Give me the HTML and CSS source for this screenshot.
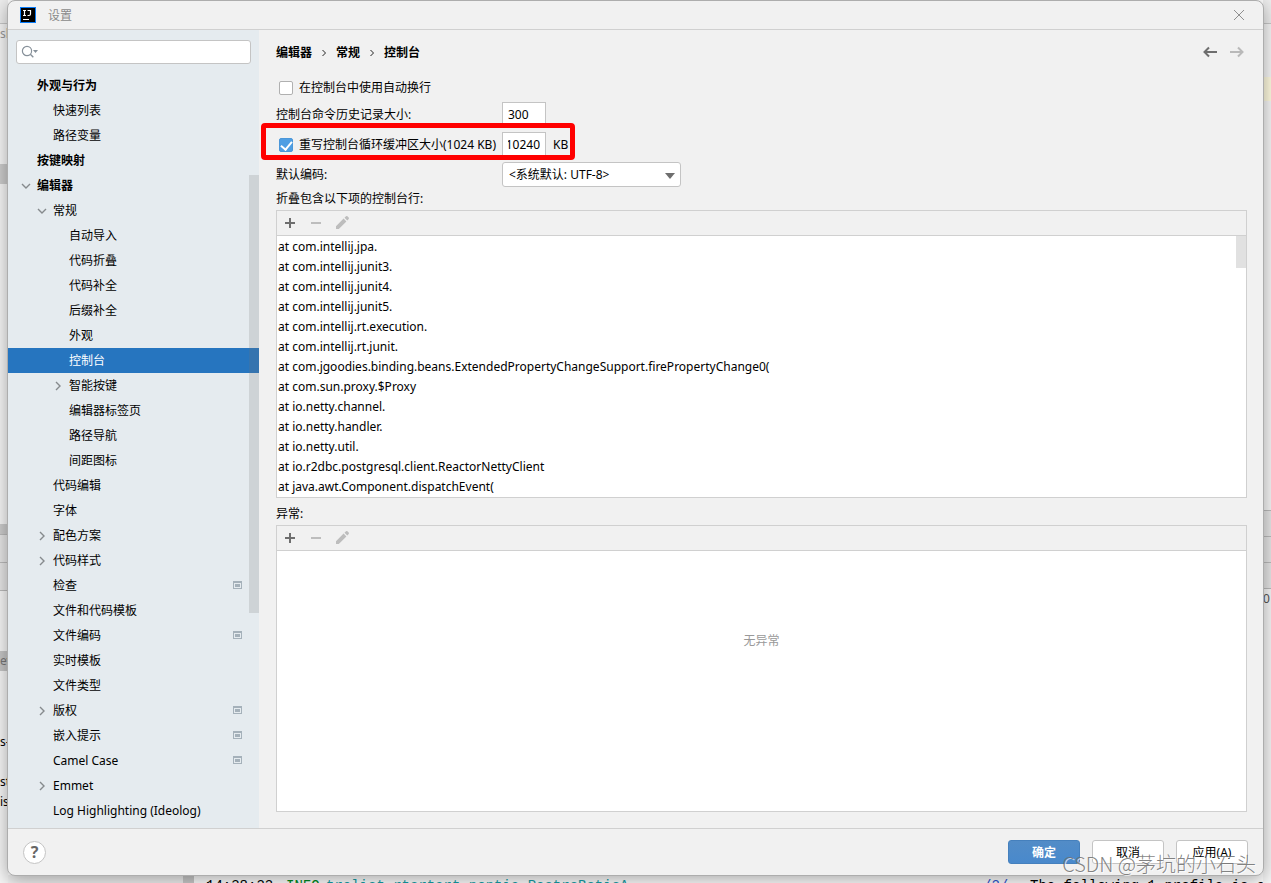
FILE: index.html
```html
<!DOCTYPE html>
<html lang="zh-CN">
<head>
<meta charset="utf-8">
<title>设置</title>
<link rel="stylesheet" href="styles.css">
</head>
<body>
<svg class="defs" aria-hidden="true">
  <symbol id="down" viewBox="0 0 10 10"><path d="M1 3l4 4 4-4" fill="none" stroke="#868a8d" stroke-width="1.4"/></symbol>
  <symbol id="right" viewBox="0 0 10 10"><path d="M3 1l4 4-4 4" fill="none" stroke="#868a8d" stroke-width="1.4"/></symbol>
  <symbol id="project" viewBox="0 0 9 8"><path d="M0 0h9v8H0z" fill="#a5b1ba"/><path d="M1 2h7v5H1z" fill="#e5ebef"/><path d="M2 3h5v3H2z" fill="#a5b1ba"/></symbol>
  <symbol id="plus" viewBox="0 0 16 16"><path d="M3 8h10M8 3v10" fill="none" stroke="#6e6e6e" stroke-width="2"/></symbol>
  <symbol id="minus" viewBox="0 0 16 16"><path d="M3 8h10" fill="none" stroke="#bdbdbd" stroke-width="2"/></symbol>
  <symbol id="pencil" viewBox="0 0 16 16"><path d="M2 11.2l7.6-7.6 2.8 2.8L4.800 14H2zM10.500 2.700L12 1.300q.7-.6 1.400 0l1.300 1.300q.6.700 0 1.400l-1.400 1.500z" fill="#bdbdbd"/></symbol>
</svg>

<div class="backdrop" aria-hidden="true">
  <div class="edge">
    <div class="e-top"></div>
    <div class="e-tab">sl</div>
    <div class="e-mark"></div>
    <div class="e-rest"></div>
    <div class="e-band e-dark"></div>
    <div class="e-band"></div>
    <div class="e-band"></div>
    <div class="e-page"><span class="e-ev">ev</span><span class="e-s">s-</span><span>st</span><span>is</span></div>
  </div>
  <div class="console"><span class="time">14:38:33</span><span class="info">INFO</span><span class="logger">trelist rtsrtart nontic.RestrsBstisA</span><span class="num">/2/</span><span>The following 1 profile is act</span></div>
  <div class="edge edge-right">
    <div class="e-top"></div>
    <div class="e-tab"></div>
    <div class="e-yellow"></div>
    <div class="e-rest"></div>
    <div class="e-band"></div>
    <div class="e-band"></div>
    <div class="e-band"></div>
    <div class="e-page"><span>0</span></div>
  </div>
</div>

<div class="dialog">
  <header class="titlebar">
    <svg class="logo" viewBox="0 0 16 16" aria-hidden="true"><path d="M0 0h16v16H0z" fill="#087cfa"/><path d="M1 1h14v14H1z" fill="#000"/><path d="M3 3.500h3M4.500 3v6M3 8.500h3M7.500 3.500h3V7q0 1.500-1.500 1.500H7.500M3 12.500h6" fill="none" stroke="#fff" stroke-width="1.200"/></svg>
    <span class="title">设置</span>
    <button class="close" aria-label="关闭"><svg viewBox="0 0 12 12"><path d="M1 1l10 10M11 1L1 11" fill="none" stroke="#8f8f8f"/></svg></button>
  </header>

  <div class="body">
    <nav class="sidebar">
      <label class="search">
        <svg viewBox="0 0 18 14" aria-hidden="true"><circle cx="6" cy="6" r="4.600" fill="none" stroke="#87919a" stroke-width="1.200"/><path d="M9.300 9.300l3 3" stroke="#87919a" stroke-width="1.400"/><path d="M12 5h5l-2.500 3z" fill="#87919a"/></svg>
        <input type="text" aria-label="搜索">
      </label>
      <ul class="tree">
        <li class="l0">外观与行为</li>
        <li class="l1">快速列表</li>
        <li class="l1">路径变量</li>
        <li class="l0">按键映射</li>
        <li class="l0"><svg class="arrow"><use href="#down"/></svg>编辑器</li>
        <li class="l1"><svg class="arrow"><use href="#down"/></svg>常规</li>
        <li class="l2">自动导入</li>
        <li class="l2">代码折叠</li>
        <li class="l2">代码补全</li>
        <li class="l2">后缀补全</li>
        <li class="l2">外观</li>
        <li class="l2 selected" aria-current="page">控制台</li>
        <li class="l2"><svg class="arrow"><use href="#right"/></svg>智能按键</li>
        <li class="l2">编辑器标签页</li>
        <li class="l2">路径导航</li>
        <li class="l2">间距图标</li>
        <li class="l1">代码编辑</li>
        <li class="l1">字体</li>
        <li class="l1"><svg class="arrow"><use href="#right"/></svg>配色方案</li>
        <li class="l1"><svg class="arrow"><use href="#right"/></svg>代码样式</li>
        <li class="l1">检查<svg class="badge"><use href="#project"/></svg></li>
        <li class="l1">文件和代码模板</li>
        <li class="l1">文件编码<svg class="badge"><use href="#project"/></svg></li>
        <li class="l1">实时模板</li>
        <li class="l1">文件类型</li>
        <li class="l1"><svg class="arrow"><use href="#right"/></svg>版权<svg class="badge"><use href="#project"/></svg></li>
        <li class="l1">嵌入提示<svg class="badge"><use href="#project"/></svg></li>
        <li class="l1">Camel Case<svg class="badge"><use href="#project"/></svg></li>
        <li class="l1"><svg class="arrow"><use href="#right"/></svg>Emmet</li>
        <li class="l1">Log Highlighting (Ideolog)</li>
      </ul>
      <div class="thumb"></div>
    </nav>

    <main class="content">
      <div class="crumbs">
        <span>编辑器</span><svg viewBox="0 0 4 8"><path d="M.5 1l3 3-3 3" fill="none" stroke="#222"/></svg>
        <span>常规</span><svg viewBox="0 0 4 8"><path d="M.5 1l3 3-3 3" fill="none" stroke="#222"/></svg>
        <span>控制台</span>
        <div class="history">
          <button aria-label="后退"><svg viewBox="0 0 14 12"><path d="M1.500 6H14M6 1.500L1.500 6 6 10.500" fill="none" stroke="#6e6e6e" stroke-width="2"/></svg></button>
          <button aria-label="前进" disabled><svg viewBox="0 0 14 12"><path d="M0 6h12.500M8 1.500L12.500 6 8 10.500" fill="none" stroke="#b9b9b9" stroke-width="2"/></svg></button>
        </div>
      </div>
      <label class="check wrap"><input type="checkbox">在控制台中使用自动换行</label>
      <div class="form">
        <div class="row">
          <label class="name" for="history">控制台命令历史记录大小:</label>
          <input class="field" id="history" type="text" value="300">
        </div>
        <div class="row marked">
          <label class="check name"><input type="checkbox" checked>重写控制台循环缓冲区大小(1024 KB)</label>
          <input class="field scrolled" id="buffer" type="text" value="10240">
          <label class="unit" for="buffer">KB</label>
          <div class="frame"></div>
        </div>
        <div class="row">
          <label class="name" for="encoding">默认编码:</label>
          <span class="combo"><select id="encoding"><option>&lt;系统默认: UTF-8&gt;</option></select><svg viewBox="0 0 10 6" aria-hidden="true"><path d="M0 0h10L5 6z" fill="#6e6e6e"/></svg></span>
        </div>
      </div>
      <div class="caption first">折叠包含以下项的控制台行:</div>
      <section class="panel">
        <div class="tools">
          <button aria-label="添加"><svg><use href="#plus"/></svg></button>
          <button aria-label="移除" disabled><svg><use href="#minus"/></svg></button>
          <button aria-label="编辑" disabled><svg><use href="#pencil"/></svg></button>
        </div>
        <ul class="lines">
          <li>at com.intellij.jpa.</li>
          <li>at com.intellij.junit3.</li>
          <li>at com.intellij.junit4.</li>
          <li>at com.intellij.junit5.</li>
          <li>at com.intellij.rt.execution.</li>
          <li>at com.intellij.rt.junit.</li>
          <li>at com.jgoodies.binding.beans.ExtendedPropertyChangeSupport.firePropertyChange0(</li>
          <li>at com.sun.proxy.$Proxy</li>
          <li>at io.netty.channel.</li>
          <li>at io.netty.handler.</li>
          <li>at io.netty.util.</li>
          <li>at io.r2dbc.postgresql.client.ReactorNettyClient</li>
          <li>at java.awt.Component.dispatchEvent(</li>
        </ul>
        <div class="list-thumb"></div>
      </section>
      <div class="caption">异常:</div>
      <section class="panel">
        <div class="tools">
          <button aria-label="添加"><svg><use href="#plus"/></svg></button>
          <button aria-label="移除" disabled><svg><use href="#minus"/></svg></button>
          <button aria-label="编辑" disabled><svg><use href="#pencil"/></svg></button>
        </div>
        <div class="empty">无异常</div>
      </section>
    </main>
  </div>

  <footer class="footer">
    <button class="help" aria-label="帮助">?</button>
    <button class="btn primary">确定</button>
    <button class="btn">取消</button>
    <button class="btn">应用(A)</button>
  </footer>
</div>
<div class="watermark">CSDN @茅坑的小石头</div>
</body>
</html>
```

FILE: styles.css
```css
* { box-sizing: border-box; }

body {
  margin: 0;
  height: 100vh;
  display: grid;
  grid-template: minmax(0, 1fr) / minmax(0, 1fr);
  overflow: hidden;
  position: relative;
  background: #f2f2f2;
  color: #000;
  font: 12px/20px "Noto Sans", "Noto Sans CJK SC", sans-serif;
}

ul { margin: 0; padding: 0; list-style: none; }
button, input, select { font: inherit; color: inherit; margin: 0; }
button { border: 0; padding: 0; background: none; display: grid; place-items: center; }
svg { display: block; flex: none; }
.defs { position: absolute; width: 0; height: 0; }

/* Application window behind the dialog */
.backdrop {
  grid-area: 1 / 1;
  display: grid;
  grid-template-columns: 8px minmax(0, 1fr) 8px;
  background: #fff;
}
.edge { display: flex; flex-direction: column; overflow: hidden; background: #f6f6f6; white-space: nowrap; }
.e-top { height: 24px; background: #eee; border-bottom: 1px solid #c8c8c8; }
.e-tab { height: 140px; color: #999; }
.e-mark { height: 20px; background: #ccc; }
.e-rest { height: 340px; }
.e-band { height: 28px; background: #e6e6e6; border-top: 1px solid #bbb; }
.e-dark { height: 10px; background: #ccc; border: 0; }
.e-page { flex: 1; display: flex; flex-direction: column; border-top: 1px solid #bbb; }
.e-ev { margin-top: 60px; background: #c6c6c6; color: #777; }
.e-s { margin: 61px 0 20px; }
.edge-right .e-tab { height: 53px; }
.edge-right .e-rest { height: 409px; }
.edge-right .e-band { height: 26px; }
.edge-right .e-page { color: #555; }
.e-yellow { height: 24px; background: #fffbe0; }
.console {
  align-self: end;
  height: 8px;
  overflow: hidden;
  display: flex;
  padding-left: 198px;
  background: linear-gradient(to right, #f2f2f2 175px, #ccc 175px, #ccc 186px, #fff 186px);
  font: 14px/22px "Liberation Mono", monospace;
  white-space: pre;
}
.console span { flex: none; }
.time { width: 80px; }
.info { width: 40px; color: #008a20; }
.logger { width: 657px; color: #16a0a8; }
.num { width: 47px; color: #2f55d4; }

/* Dialog */
.dialog {
  grid-area: 1 / 1;
  z-index: 1;
  margin: 0 7px 7px;
  display: flex;
  flex-direction: column;
  overflow: hidden;
  border: 1px solid #adadad;
  border-radius: 8px;
  background: #f1f1f1;
  box-shadow: 0 4px 18px rgba(0, 0, 0, .35);
}
.titlebar {
  height: 29px;
  flex: none;
  display: flex;
  align-items: center;
  gap: 12px;
  padding: 0 18px 0 12px;
  border-bottom: 1px solid #d0d0d0;
  color: #8a8a8a;
}
.title { padding-top: 2px; }
.logo { width: 16px; height: 16px; }
.close { margin-left: auto; }
.close svg { width: 12px; height: 12px; }
.body { flex: 1; min-height: 0; display: flex; }

/* Sidebar */
.sidebar {
  position: relative;
  width: 251px;
  flex: none;
  overflow: hidden;
  background: #e5ebef;
}
.search {
  display: flex;
  align-items: center;
  height: 24px;
  margin: 10px 8px 9px;
  padding-left: 4px;
  border: 1px solid #c4c4c4;
  border-radius: 3px;
  background: #fff;
}
.search svg { width: 18px; height: 14px; }
.search input { flex: 1; min-width: 0; border: 0; outline: 0; background: none; }
.tree li {
  height: 25px;
  line-height: 25px;
  padding-right: 17px;
  display: flex;
  align-items: center;
  white-space: nowrap;
}
.tree .l0 { padding-left: 29px; font-weight: 700; }
.tree .l1 { padding-left: 45px; }
.tree .l2 { padding-left: 61px; }
.tree .selected { background: #2675bf; color: #fff; }
.arrow { width: 10px; height: 10px; margin: 0 6px 0 -16px; }
.badge { width: 9px; height: 8px; margin: 0 0 2px auto; }
.thumb {
  position: absolute;
  top: 145px;
  right: 0;
  width: 10px;
  height: 438px;
  background: rgba(115, 115, 115, .2);
}

/* Settings page */
.content {
  flex: 1;
  min-width: 0;
  display: flex;
  flex-direction: column;
  padding: 10px 16px 16px 17px;
}
.crumbs { display: flex; align-items: center; height: 24px; gap: 10px; font-weight: 700; }
.crumbs > span { padding-top: 2px; }
.crumbs > svg { width: 4px; height: 8px; margin-top: 2px; }
.history { display: flex; gap: 13px; margin-left: auto; padding-right: 3px; }
.history svg { width: 14px; height: 12px; }
.check { display: flex; align-items: center; white-space: nowrap; }
.check input {
  appearance: none;
  width: 14px;
  height: 14px;
  margin: 0 6px 0 3px;
  border: 1px solid #b0b0b0;
  border-radius: 2px;
  background: #fff;
}
.check input:checked {
  border-color: #4b97d9;
  background: #4f9ee3;
  display: grid;
  place-items: center;
}
.check input:checked::before {
  content: "";
  width: 5px;
  height: 9px;
  margin-bottom: 3px;
  border: solid #fff;
  border-width: 0 2px 2px 0;
  transform: rotate(40deg);
}
.wrap { height: 20px; margin: 14px 0 4px; }
.form { display: flex; flex-direction: column; gap: 5px; }
.row { position: relative; display: flex; align-items: center; height: 25px; }
.name { width: 226px; flex: none; }
.field {
  width: 44px;
  height: 25px;
  padding: 0 5px;
  border: 1px solid #c4c4c4;
  border-radius: 0;
  outline: 0;
  background: #fff;
}
.scrolled { direction: rtl; }
.unit { margin-left: 7px; }
.frame {
  position: absolute;
  top: -9px;
  left: -15px;
  width: 314px;
  height: 37px;
  border: 5px solid #f00;
  border-radius: 4px;
  pointer-events: none;
}
.marked { z-index: 1; }
.combo { display: grid; align-items: center; width: 179px; height: 25px; }
.combo select {
  grid-area: 1 / 1;
  width: 100%;
  height: 100%;
  appearance: none;
  padding: 0 6px;
  border: 1px solid #c4c4c4;
  border-radius: 3px;
  background: #fff;
}
.combo svg { grid-area: 1 / 1; justify-self: end; width: 10px; height: 6px; margin: 2px 6px 0 0; pointer-events: none; }
.caption { height: 27px; padding-top: 6px; flex: none; }
.first { height: 23px; padding-top: 2px; }
.panel {
  position: relative;
  flex: 1;
  min-height: 0;
  display: flex;
  flex-direction: column;
  border: 1px solid #d0d0d0;
  background: #fff;
}
.tools { display: flex; flex: none; height: 25px; background: #f1f1f1; border-bottom: 1px solid #d0d0d0; }
.tools button { width: 26px; height: 24px; }
.tools svg { width: 16px; height: 16px; }
.lines { flex: 1; min-height: 0; overflow: hidden; padding: 1px 0 0 1px; }
.lines li { height: 20px; white-space: nowrap; }
.list-thumb { position: absolute; top: 25px; right: 0; width: 10px; height: 32px; background: #e1e1e1; }
.empty { flex: 1; display: grid; place-items: center; padding-bottom: 80px; color: #999; }

/* Footer */
.footer {
  height: 47px;
  flex: none;
  display: flex;
  align-items: center;
  gap: 12px;
  padding: 0 15px;
  border-top: 1px solid #d0d0d0;
}
.help {
  width: 23px;
  height: 23px;
  margin-right: auto;
  border: 1px solid #c4c4c4;
  border-radius: 50%;
  background: #fff;
  color: #666;
  font-size: 16px;
  font-weight: 700;
  line-height: 20px;
}
.btn { width: 72px; height: 24px; padding-top: 2px; border: 1px solid #c4c4c4; border-radius: 3px; background: #fff; }
.primary { border-color: #4580bd; background: linear-gradient(#528cc7, #4989cc); color: #fff; font-weight: 700; }

.watermark {
  position: absolute;
  right: 15px;
  bottom: 5px;
  z-index: 2;
  color: rgba(110, 110, 110, .85);
  font: 20px/28px "Noto Sans CJK SC", sans-serif;
  font-weight: 300;
  text-shadow: 1px 1px 0 rgba(255, 255, 255, .7);
  white-space: nowrap;
}
```
